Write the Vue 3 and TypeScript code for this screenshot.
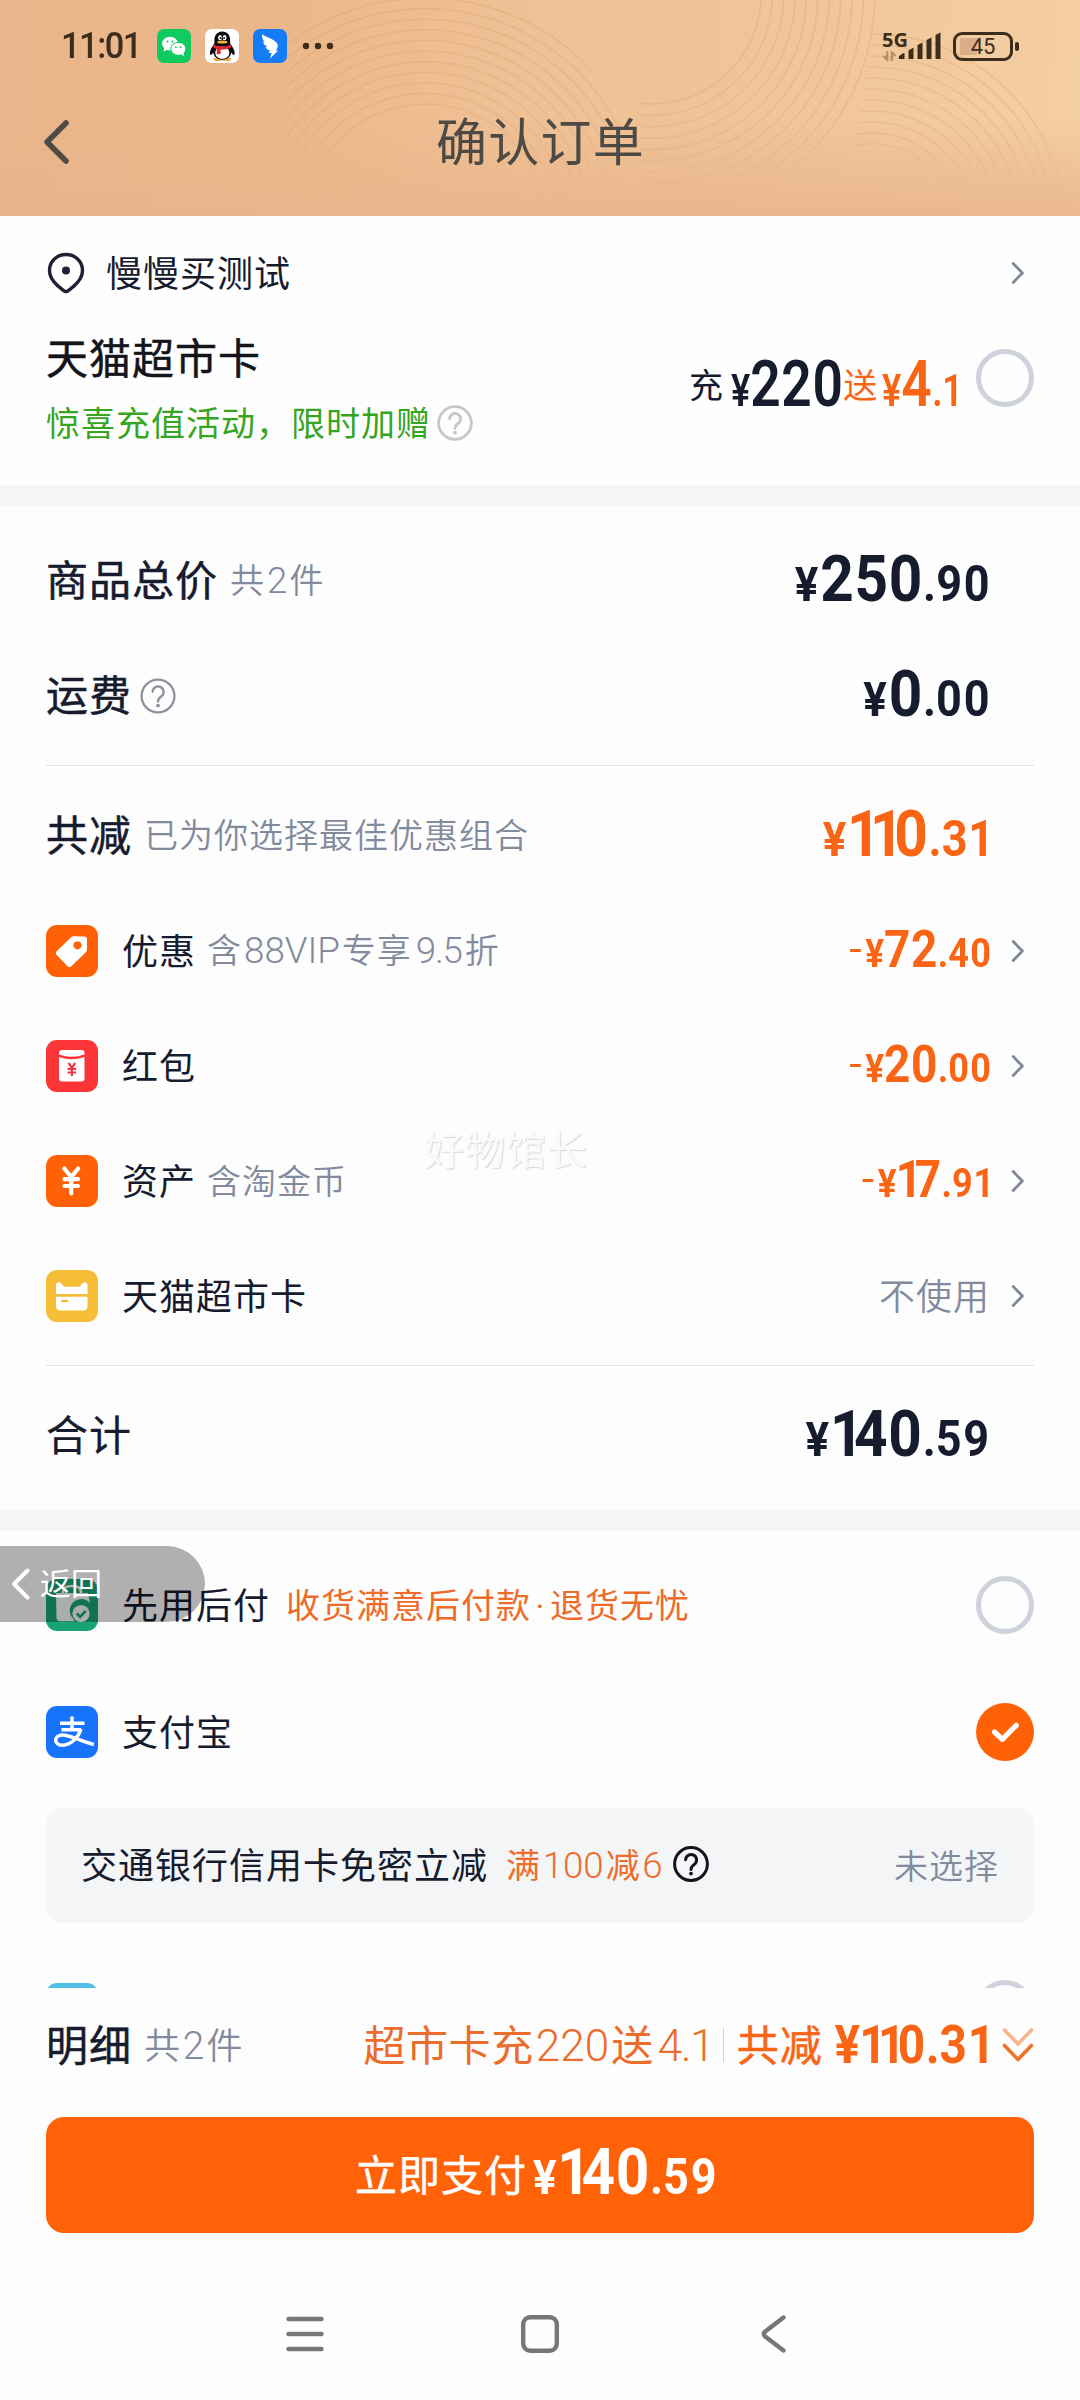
<script setup lang="ts">
import { h } from 'vue'
import type { FunctionalComponent } from 'vue'

interface Discount {
  icon: 'tag' | 'packet' | 'yen' | 'card'
  color: string
  label: string
  note?: string
  amount?: string
}

const discounts: Discount[] = [
  { icon: 'tag', color: '#ff6206', label: '优惠', note: '含88VIP专享9.5折', amount: '72.40' },
  { icon: 'packet', color: '#fb3437', label: '红包', amount: '20.00' },
  { icon: 'yen', color: '#ff6206', label: '资产', note: '含淘金币', amount: '17.91' },
  { icon: 'card', color: '#f5be36', label: '天猫超市卡' },
]

// Digits are wrapped one by one so the "1" can take a narrower slot.
const digits = (text: string) =>
  [...text].map((c) => h('span', { class: c === '1' ? 'one' : 'num' }, c))

const Price: FunctionalComponent<{ value: string; minus?: boolean }> = (props) => {
  const [whole, cents] = props.value.split('.')
  return h('span', { class: 'price' }, [
    props.minus ? h('span', { class: 'minus' }, '-') : null,
    h('span', { class: 'yen' }, '¥'),
    h('span', { class: 'whole' }, digits(whole)),
    cents ? h('span', { class: 'cents' }, [h('span', { class: 'dot' }, '.'), ...digits(cents)]) : null,
  ])
}
Price.props = { value: String, minus: Boolean }

// Latin runs inside Chinese text get their own face and a little air on both sides.
const Mixed: FunctionalComponent<{ text: string }> = (props) =>
  h('span', { class: 'mixed' }, props.text.split(/([0-9A-Z.]+)/).filter(Boolean).map((part) =>
    /^[0-9A-Z.]/.test(part) ? h('span', { class: ['latin', { tight: part.includes('.') }] }, part) : part,
  ))
Mixed.props = { text: String }

const Help: FunctionalComponent<{ color: string; weight: number }> = (props) =>
  h('svg', { class: 'help', viewBox: '0 0 36 36', fill: 'none', stroke: props.color, 'stroke-width': props.weight }, [
    h('circle', { cx: 18, cy: 18, r: 16.4 }),
    h('path', { d: 'M12.6 13.8a5.5 5.5 0 1 1 8.6 4.7c-2.2 1.5-3.2 2.2-3.2 5', 'stroke-linecap': 'round' }),
    h('circle', { cx: 18, cy: 27.6, r: 1.9, fill: props.color, stroke: 'none' }),
  ])
Help.props = ['color', 'weight']

const Chevron: FunctionalComponent = () =>
  h('svg', { class: 'chevron', viewBox: '0 0 14 24', fill: 'none' }, [
    h('path', { d: 'M2.2 2.6 11.4 12l-9.2 9.4', stroke: '#7f8798', 'stroke-width': 2.8, 'stroke-linecap': 'round', 'stroke-linejoin': 'round' }),
  ])

const range = (n: number) => Array.from({ length: n }, (_, i) => i)
</script>

<template>
  <div class="phone">
    <header class="header">
      <svg class="rings" viewBox="0 0 1080 216" fill="none">
        <defs>
          <linearGradient id="fade" x1="0" y1="0" x2="0" y2="1">
            <stop offset="0" stop-color="#fff" />
            <stop offset=".6" stop-color="#fff" stop-opacity=".8" />
            <stop offset=".95" stop-color="#fff" stop-opacity="0" />
          </linearGradient>
          <mask id="ringMask"><rect width="1080" height="216" fill="url(#fade)" /></mask>
          <clipPath id="leftPart"><path d="M285 0H540L620 110V216H285z" /></clipPath>
          <clipPath id="middlePart"><path d="M640 0H900V216H640z" /></clipPath>
          <clipPath id="rightPart"><path d="M872 0H1080V216H830Q872 110 872 0z" /></clipPath>
        </defs>
        <g mask="url(#ringMask)" stroke="#d09a6a" stroke-opacity=".3" stroke-width="1.6">
          <g clip-path="url(#leftPart)">
            <circle v-for="i in range(11)" :key="i" cx="425" cy="226" :r="122 + i * 10.6" />
          </g>
          <g clip-path="url(#middlePart)">
            <circle v-for="i in range(11)" :key="i" cx="652" cy="-5" :r="109 + i * 11.4" />
          </g>
          <g clip-path="url(#rightPart)">
            <circle v-for="i in range(11)" :key="i" cx="872" cy="226" :r="82 + i * 11" />
          </g>
        </g>
      </svg>

      <div class="status">
        <div class="status-left">
          <span class="clock">11:01</span>
          <svg class="app" viewBox="0 0 34 34">
            <rect width="34" height="34" rx="7" fill="#0ecb5f" />
            <ellipse cx="13" cy="14.6" rx="8" ry="6.9" fill="#fff" />
            <path d="M7.4 18.5 6.4 22.6 11 20.6z" fill="#fff" />
            <ellipse cx="21.3" cy="19.8" rx="7.6" ry="6.5" fill="#fff" stroke="#0ecb5f" stroke-width="1" />
            <path d="M23.5 25 27 27.2 26.4 23.4z" fill="#fff" />
            <g fill="#0ecb5f">
              <circle cx="10.4" cy="12.6" r="1" /><circle cx="15.6" cy="12.6" r="1" />
              <circle cx="18.9" cy="18.2" r=".9" /><circle cx="23.6" cy="18.2" r=".9" />
            </g>
          </svg>
          <svg class="app" viewBox="0 0 34 34">
            <rect width="34" height="34" rx="7" fill="#fff" />
            <ellipse cx="13" cy="30.2" rx="4.6" ry="1.8" fill="#e9a93b" />
            <ellipse cx="21.6" cy="30.2" rx="4.6" ry="1.8" fill="#e9a93b" />
            <path d="M17.3 2.4c-5 0-7.9 3.7-7.9 8.6v3.6C7 18 4.8 21.5 4.9 24.2c.1 3 2 1.6 3.3-.6 1 4.4 4 7.1 9.1 7.1s8.1-2.7 9.1-7.1c1.3 2.2 3.2 3.6 3.3.6.1-2.7-2.100-6.200-4.500-9.600V11c0-4.900-2.900-8.600-7.900-8.600z" fill="#0b0b0d" />
            <path d="M17.3 17.5c-4.6 0-7 3-7 6.3 0 3.6 2.9 6 7 6s7-2.4 7-6c0-3.3-2.4-6.3-7-6.3z" fill="#fff" />
            <ellipse cx="15" cy="8.6" rx="1.9" ry="2.7" fill="#fff" /><ellipse cx="19.6" cy="8.6" rx="1.9" ry="2.7" fill="#fff" />
            <circle cx="15.6" cy="9" r=".9" /><circle cx="19.1" cy="9" r=".9" />
            <ellipse cx="17.3" cy="13" rx="5.2" ry="1.5" fill="#edb23f" />
            <path d="M8.600 15.600c5 2.600 12.400 2.600 17.400 0v3c-3.400 1.700-7 2.300-10.600 2.200l.3 3.800c-1.300.8-2.700.9-4 .6l.2-5.100c-1.300-.3-2.400-.8-3.600-1.400z" fill="#dd2530" />
          </svg>
          <svg class="app" viewBox="0 0 34 34">
            <rect width="34" height="34" rx="7" fill="#157cf8" />
            <path d="M9.2 5.200c4.500 3.200 12.400 5 15 9.200 1.300 2.300.2 4.500-1.200 7h2.200L17 29.600l1.700-5.600h-3l1.200-2.600c-2.200-.4-3.800-1.700-4.200-3.400l1.700-.1c-2.400-1.400-4.200-3.200-4.300-5.300l1.600.3C9.500 10.700 8.600 8 9.200 5.200z" fill="#fff" />
          </svg>
          <svg class="more" viewBox="0 0 32 8" fill="#3c2d1c">
            <circle cx="4" cy="4" r="3.2" /><circle cx="16" cy="4" r="3.2" /><circle cx="28" cy="4" r="3.2" />
          </svg>
        </div>
        <div class="status-right">
          <div class="network">
            <span class="gen">5G</span>
            <svg class="updown" viewBox="0 0 15 11" fill="none" stroke="#8a6b4c" stroke-opacity=".6" stroke-width="2.4">
              <path d="M5 0v10L1 5.5M10 11V1l4 4.5" />
            </svg>
          </div>
          <svg class="bars" viewBox="0 0 42 28" fill="#3c2d1c">
            <path d="M0 27v-3l4.5-3h1v6zM9.500 27V18.500l5-3V27zM18.500 27V13l5-2.500V27zM27.500 27V8l5-2.500V27zM36.500 27V3l5-2.500V27z" />
          </svg>
          <div class="battery">45</div>
        </div>
      </div>

      <div class="titlebar">
        <svg class="back" viewBox="0 0 28 48" fill="none">
          <path d="M24 5 5 24l19 19" stroke="#4e4b46" stroke-width="5.6" stroke-linecap="round" stroke-linejoin="round" />
        </svg>
        <h1>确认订单</h1>
      </div>
    </header>

    <section class="top">
      <div class="address">
        <svg class="pin" viewBox="0 0 38 42" fill="none">
          <path d="M19 2.5C9.5 2.5 2.5 9.7 2.5 18.5c0 7 4.2 11.8 8.6 15.6 2.200 1.900 4.200 3.200 5.600 4.500q2.300 2 4.600 0c1.400-1.300 3.400-2.600 5.600-4.500 4.400-3.800 8.600-8.600 8.600-15.600 0-8.800-7-16-16.500-16z" stroke="#1d2133" stroke-width="3.4" />
          <circle cx="19" cy="18.6" r="4" fill="#1d2133" />
        </svg>
        <span class="t37">慢慢买测试</span>
        <Chevron />
      </div>
      <div class="recharge">
        <div class="recharge-info">
          <div class="t43 black">天猫超市卡</div>
          <div class="gift"><span>惊喜充值活动，限时加赠</span><Help color="#c6c7ca" :weight="2.8" /></div>
        </div>
        <div class="offer">
          <span class="word">充</span><Price class="offer-price first" value="220" />
          <span class="word orange">送</span><Price class="offer-price orange" value="4.1" />
        </div>
        <i class="radio"></i>
      </div>
    </section>

    <section class="sums">
      <div class="row big">
        <span class="t43">商品总价</span><Mixed class="note gap8" text="共2件" /><Price class="end" value="250.90" />
      </div>
      <div class="row big">
        <span class="t43">运费</span><Help class="fee-help" color="#8e929d" :weight="2.3" /><Price class="end" value="0.00" />
      </div>
      <hr />
      <div class="row big">
        <span class="t43">共减</span><span class="note gap8">已为你选择最佳优惠组合</span><Price class="end orange" value="110.31" />
      </div>
      <div v-for="d in discounts" :key="d.label" class="row">
        <svg class="badge" viewBox="0 0 52 52">
          <rect width="52" height="52" rx="11" :fill="d.color" />
          <path v-if="d.icon === 'tag'" fill="#fff" fill-rule="evenodd" d="M10.7 26.2 24.8 12.6q1.4-1.400 3.400-1.300l10 .2q2.800.1 2.800 2.800v9.600q0 2-1.300 3.500L25.300 41.200q-2 2-4-.1l-10.600-11q-1.900-2 0-3.900zM31.500 16.200a4.100 4.100 0 1 0 .01 0z" />
          <template v-else-if="d.icon === 'packet'">
            <path fill="#fff" d="M13 13q0-3 3-3h19.500q3 0 3 3v1.500q-12.700 4.600-25.500 0zM13 17q12.700 4.600 25.500 0v21.500q0 3-3 3H16q-3 0-3-3z" />
            <path d="m22.500 23 3.400 4.600 3.400-4.600M25.900 27.600V36M21.600 28.800h8.600M21.600 32.500h8.600" fill="none" stroke="#ee3a44" stroke-width="2.2" />
          </template>
          <path v-else-if="d.icon === 'yen'" d="m18.200 13.500 7 8.500 7-8.500M25.200 22v16.500M18.500 24.200h13.500M18.500 31h13.500" fill="none" stroke="#fff" stroke-width="4.2" stroke-linecap="round" />
          <template v-else>
            <path fill="#fff" d="M10 15.200q0-3.200 2.800-3 2 .2 3.400 2.200l.8 1.100q.9 1.200 2.500 1.200h12.500q1.600 0 2.500-1.200l.8-1.100q1.400-2 3.400-2.200 2.800-.2 2.800 3V24H10zM10 26.800h31.500V36q0 4.500-4.500 4.500H14.500Q10 40.500 10 36z" />
            <path d="M16.200 31h5" stroke="#f5be36" stroke-width="2.6" stroke-linecap="round" />
          </template>
        </svg>
        <span class="t37 name">{{ d.label }}</span>
        <Mixed v-if="d.note" class="note gap9" :text="d.note" />
        <Price v-if="d.amount" class="end small orange" :value="d.amount" minus />
        <span v-else class="end unused">不使用</span>
        <Chevron />
      </div>
      <hr />
      <div class="row big">
        <span class="t43 regular">合计</span><Price class="end" value="140.59" />
      </div>
      <span class="watermark">好物馆长</span>
    </section>

    <section class="pay">
      <div class="method">
        <svg class="badge" viewBox="0 0 52 52">
          <rect width="52" height="52" rx="11" fill="#19a478" />
          <path d="M17 14v-1q0-6 9-6t9 6v1" fill="none" stroke="#fff" stroke-width="2.6" />
          <path d="M10 14h32l2 10a9.800 9.800 0 0 0-17.500 15q1 2.300 2.600 3.300H14.500q-4.200 0-4-4z" fill="#f3faf7" />
          <circle cx="35" cy="34.5" r="8.6" fill="#f3faf7" />
          <path d="m30.800 34.300 3.300 3.500 5.600-6" fill="none" stroke="#19a478" stroke-width="2.6" />
        </svg>
        <span class="t37 name">先用后付</span>
        <span class="slogan">收货满意后付款<b>·</b>退货无忧</span>
        <i class="radio"></i>
      </div>
      <div class="method alipay">
        <svg class="badge" viewBox="0 0 52 52">
          <rect width="52" height="52" rx="11" fill="#1873fb" />
          <g fill="none" stroke="#fff">
            <path d="M14 17.300h24.500M26 10.500v13M15.500 23.800h19.500" stroke-width="3.4" />
            <path d="M35 23c-2.500 8.500-10.500 16-18.500 16.200-9 .2-9-9.800-.4-10.200 7.500-.3 14.500 4.800 31.700 9.500" stroke-width="3.5" />
          </g>
        </svg>
        <span class="t37 name">支付宝</span>
        <svg class="checked" viewBox="0 0 58 58">
          <circle cx="29" cy="29" r="29" fill="#ff6206" />
          <path d="m18.500 29 7.800 7.300 14-14" fill="none" stroke="#fff" stroke-width="5.2" stroke-linecap="round" stroke-linejoin="round" />
        </svg>
      </div>
      <div class="coupon">
        <span class="t37">交通银行信用卡免密立减</span>
        <Mixed class="cut" text="满100减6" />
        <Help color="#14151a" :weight="3" />
        <span class="unpicked">未选择</span>
      </div>
      <div class="method next">
        <span class="badge sky"></span>
        <i class="radio"></i>
      </div>
      <div class="return">
        <svg viewBox="0 0 22 36" fill="none">
          <path d="M17.5 4.500 4 18l13.500 13.500" stroke="#fff" stroke-width="4" stroke-linecap="round" stroke-linejoin="round" />
        </svg>
        <span>返回</span>
      </div>
    </section>

    <footer class="bottom">
      <div class="detail">
        <span class="t43">明细</span><Mixed class="count" text="共2件" />
        <Mixed class="deal" text="超市卡充220送4.1" />
        <i class="bar"></i>
        <span class="t43 orange">共减</span>
        <Price class="flat orange" value="110.31" />
        <svg class="down" viewBox="0 0 32 36" fill="none" stroke-width="3.6" stroke-linecap="round" stroke-linejoin="round">
          <path d="m2.500 3 13.500 14L29.500 3" stroke="#f8b48b" />
          <path d="m2.500 18.500 13.500 14 13.500-14" stroke="#ee7128" />
        </svg>
      </div>
      <div class="submit"><span class="t43">立即支付</span><Price class="due" value="140.59" /></div>
    </footer>

    <nav class="nav">
      <svg viewBox="0 0 38 38"><path d="M2.500 4h33M2.500 19h33M2.500 34h33" /></svg>
      <svg viewBox="0 0 38 38"><rect x="2.2" y="2.2" width="33.6" height="33.6" rx="7" /></svg>
      <svg viewBox="0 0 38 38"><path d="M27.500 2.500 9.500 16.200q-3.600 2.800 0 5.600l18 13.700" /></svg>
    </nav>
  </div>
</template>

<style>
body { background: #fdfdfe; }

.price {
  display: inline-flex;
  align-items: baseline;
  margin-top: 3px;
  font-family: Roboto, "Liberation Sans", sans-serif;
  font-weight: 700;
  font-size: 65px;
  line-height: 76px;
  transform: scaleX(0.9);
  transform-origin: right center;
  white-space: nowrap;
}
.price .num { letter-spacing: 0.012em; }
.price .one { letter-spacing: -0.16em; margin-left: -0.02em; }
.price .cents { font-size: 50px; }
.price .cents .num { letter-spacing: 0.04em; }
.price .cents .one:last-child { letter-spacing: -0.06em; }
.price .yen { font-size: 49px; margin-right: 2px; }
.price .minus { display: inline-block; font-weight: 400; margin-right: 4px; transform: translateY(-4px) scaleX(1.25); transform-origin: right center; }

.help { width: 36px; height: 36px; flex: none; }
.chevron { width: 14px; height: 24px; flex: none; }

.latin { margin: 0 2px; font-family: Roboto, sans-serif; font-weight: 350; font-size: 1.08em; letter-spacing: 0; }
.latin.tight { letter-spacing: -1.2px; margin: 0 3px 0 4px; }
</style>

<style scoped>
.phone {
  width: 1080px;
  height: 2400px;
  display: flex;
  flex-direction: column;
  overflow: hidden;
  background: #fdfdfe;
  color: #171b2e;
  font-family: "Noto Sans CJK SC", sans-serif;
  font-weight: 400;
  white-space: nowrap;
}
.header {
  position: relative;
  flex: none;
  height: 216px;
  background:
    linear-gradient(180deg, rgba(233, 180, 138, 0) 55%, rgba(233, 180, 138, 0.85) 100%),
    linear-gradient(95deg, #e9b58a 0%, #ebb88a 28%, #efc094 45%, #f1c69a 75%, #f4cfa2 100%);
}
.rings { position: absolute; inset: 0; width: 1080px; height: 216px; }
.status {
  position: relative;
  height: 92px;
  padding: 0 67px 0 61px;
  display: flex;
  align-items: center;
  justify-content: space-between;
}
.status-left, .status-right { display: flex; align-items: center; }
.clock {
  width: 96px;
  font: 500 37px/40px Roboto, sans-serif;
  letter-spacing: -1.6px;
  color: #3c2d1c;
  transform: scaleX(0.93);
  transform-origin: left center;
}
.app { width: 34px; height: 34px; margin-right: 14px; }
.more { width: 32px; height: 8px; margin-left: 1px; }
.network { display: flex; flex-direction: column; width: 17px; height: 30px; }
.gen { font: 700 20px/18px "Open Sans", sans-serif; color: #3c2d1c; }
.updown { width: 15px; height: 11px; margin-top: 2px; }
.bars { width: 42px; height: 28px; }
.battery {
  position: relative;
  box-sizing: border-box;
  width: 60px;
  height: 29px;
  margin: 0 0 0 12px;
  border: 3px solid #3c2d1c;
  border-radius: 9px;
  font: 400 22px/24px Roboto, sans-serif;
  text-align: center;
  color: #3c2d1c;
  background: linear-gradient(#dcae86, #dcae86) 4px 3px / 17px 17px no-repeat;
}
.battery::after {
  content: "";
  position: absolute;
  right: -9px;
  top: 7px;
  width: 4px;
  height: 9px;
  border-radius: 2px;
  background: #3c2d1c;
}
.titlebar {
  position: relative;
  height: 98px;
  display: flex;
  align-items: center;
  justify-content: center;
}
.back { position: absolute; left: 42px; top: 26px; width: 28px; height: 48px; }
h1 {
  margin: -5px 0 0 1px;
  font-size: 51px;
  line-height: 60px;
  font-weight: 400;
  letter-spacing: 1.2px;
  color: #4d4a45;
}
.t37 { margin-top: -4px; font-size: 36px; line-height: 50px; letter-spacing: 1px; }
.t43 { margin-top: -5px; font-size: 42px; line-height: 56px; letter-spacing: 1px; -webkit-text-stroke: 0.5px currentColor; }
.regular { -webkit-text-stroke: 0.2px currentColor; }
.black { color: #14151a; }
.orange { color: #f96515; }
.end { margin-left: auto; }
.radio {
  box-sizing: border-box;
  width: 58px;
  height: 58px;
  flex: none;
  border: 5.5px solid #ced2db;
  border-radius: 50%;
}

.top { flex: none; box-sizing: border-box; height: 269px; padding: 0 46px; background: #fefefe; }
.address { height: 114px; display: flex; align-items: center; }
.pin { width: 38px; height: 42px; margin: 0 21px 0 1px; }
.address .chevron { margin-left: auto; margin-right: 9px; }
.recharge { display: flex; height: 120px; }
.recharge-info { width: 500px; padding-top: 3px; }
.gift { display: flex; align-items: center; height: 60px; margin-top: 9px; font-size: 34px; line-height: 50px; letter-spacing: 1px; color: #36a522; }
.gift span { margin-top: -3px; }
.gift .help { margin-left: 6px; }
.offer { display: flex; align-items: center; margin-left: 157px; width: 258px; height: 108px; }
.word { font-size: 34px; line-height: 50px; }
.offer + .radio { margin-top: 19px; margin-left: 29px; }
.offer-price { transform: scaleX(0.82); transform-origin: left center; margin: 6px -18px 0 5px; }
.offer-price.first { margin-left: 8px; margin-right: -25px; }

.sums {
  position: relative;
  flex: none;
  box-sizing: border-box;
  height: 1025px;
  padding: 17px 46px 0;
  border-top: 21px solid #f3f5f7;
}
.row { height: 115px; display: flex; align-items: center; }
.row.big .end { margin-right: 43px; }
.note { margin-top: -3px; font-size: 34px; line-height: 50px; letter-spacing: 1px; color: #828b9d; font-weight: 350; }
.note.mixed { margin-top: -1px; }
.gap8 { margin-left: 12px; }
.gap9 { margin-left: 11px; }
.fee-help { margin-left: 8px; }
hr { height: 1px; margin: 12px 0; border: 0; background: #dfe1e5; }
.badge { width: 52px; height: 52px; flex: none; }
.name { margin-left: 24px; }
.row:not(.big) .end { margin-right: 19px; }
.row .chevron { margin-right: 9px; }
.row:not(.big) .unused { margin: -4px 21px 0 auto; font-size: 36px; letter-spacing: 1px; color: #828b9d; font-weight: 350; }
.watermark {
  position: absolute;
  left: 424px;
  top: 612px;
  font-size: 40px;
  line-height: 60px;
  letter-spacing: 1px;
  font-weight: 400;
  color: #fafafb;
  text-shadow: 1px 1px 1px #d6d7da;
}

.pay { position: relative; flex: none; box-sizing: border-box; height: 478px; padding: 16px 46px 0; border-top: 21px solid #f3f5f7; overflow: hidden; }
.method { height: 116px; display: flex; align-items: center; }
.method .radio, .checked { margin-left: auto; }
.slogan { margin: -3px 0 0 16px; font-size: 34px; letter-spacing: 1px; color: #ee6c2a; }
.slogan b { display: inline-block; width: 19px; font-family: Roboto, sans-serif; font-weight: 400; text-align: center; }
.alipay { height: 138px; }
.checked { width: 58px; height: 58px; }
.coupon {
  height: 115px;
  margin-top: 7px;
  display: flex;
  align-items: center;
  padding: 0 35px;
  border-radius: 18px;
  background: #f3f5f7;
}
.coupon .t37 { margin-top: -6px; }
.coupon .help { margin-top: -3px; }
.cut { margin: -5px 8px 0 18px; font-size: 34px; letter-spacing: 0.6px; color: #ee6c2a; }
.unpicked { margin: -3px 0 0 auto; font-size: 34px; letter-spacing: 1px; color: #828b9d; font-weight: 350; }
.next { height: 172px; }
.sky { border-radius: 11px; background: #52bfe8; }
.return {
  position: absolute;
  left: 0;
  top: 15px;
  width: 205px;
  height: 76px;
  box-sizing: border-box;
  padding-left: 10px;
  display: flex;
  align-items: center;
  border-radius: 0 38px 38px 0;
  background: rgba(0, 0, 0, 0.3);
  color: #fff;
}
.return svg { width: 22px; height: 36px; margin-right: 8px; }
.return span { margin-top: -6px; font-size: 31px; }

.bottom { flex: none; height: 288px; padding: 0 46px; background: #fdfdfe; }
.detail { height: 129px; box-sizing: border-box; padding-bottom: 15px; display: flex; align-items: center; }
.count { margin: -4px 0 0 12px; font-size: 36px; letter-spacing: 0.8px; color: #828b9d; font-weight: 350; }
.deal { margin: -6px 0 0 auto; font-size: 42px; letter-spacing: 0.6px; color: #ec6c2b; }
.bar { width: 1px; height: 34px; margin: 0 13px 0 6px; background: #ecc9b4; }
.down { width: 32px; height: 36px; margin-left: 10px; }
.submit {
  height: 116px;
  display: flex;
  align-items: center;
  justify-content: center;
  border-radius: 18px;
  background: #ff6207;
  color: #fff;
}

.nav { flex: 1; display: flex; justify-content: center; gap: 197px; padding-top: 39px; background: #fefefe; }
.nav svg { width: 38px; height: 38px; fill: none; stroke: #777; stroke-width: 4.4; stroke-linecap: round; }
</style>

<style>
.price.small { font-size: 51px; line-height: 60px; }
.price.small .cents { font-size: 40px; }
.price.small .yen { font-size: 39px; margin-right: 0; }
.price.small .minus { font-size: 40px; }
.price.flat { font-size: 53px; line-height: 60px; margin: 0 0 0 -6px; }
.price.flat .cents, .price.flat .yen { font-size: inherit; margin-right: 0; }
.price.due { margin: 0 -14px 0 6px; transform-origin: left center; }
.price.offer-price { font-weight: 600; }
.price.offer-price .yen { font-size: 44px; margin-right: 0; }
.price.offer-price .cents { font-size: 45px; }
.deal .latin { font-size: 1.05em; }
</style>
